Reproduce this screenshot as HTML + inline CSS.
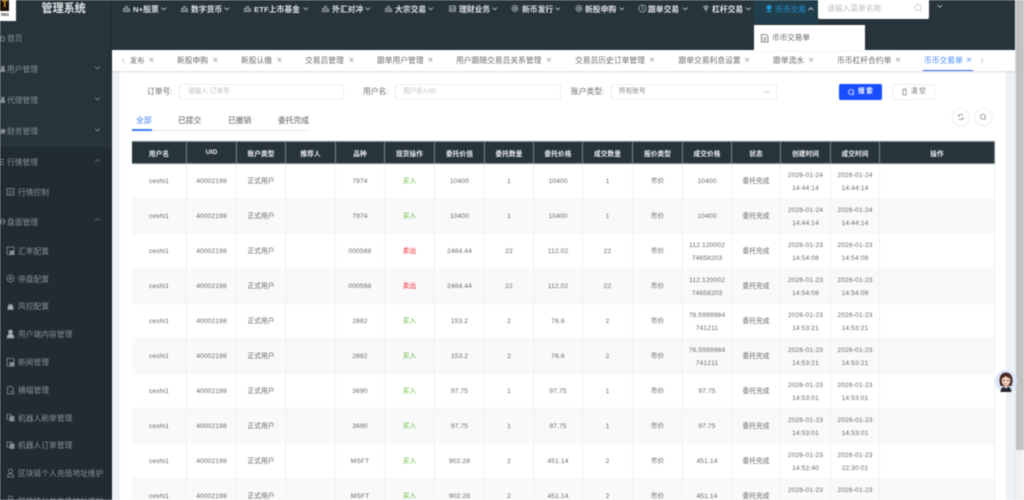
<!DOCTYPE html>
<html lang="zh"><head><meta charset="utf-8"><title>管理系统</title>
<style>
*{box-sizing:border-box}
html,body{margin:0;padding:0;width:1024px;height:500px;overflow:hidden;background:#fff}
#r{position:relative;width:1024px;height:500px;overflow:hidden;background:#27343b;font-family:"Liberation Sans","Noto Sans CJK SC",sans-serif;filter:blur(.45px)}
.a{position:absolute}
.t{position:absolute;white-space:nowrap;line-height:12px;height:12px;margin-top:1px}
.m{font-size:7.77px;color:#dfe2e4;font-weight:700;letter-spacing:.03px}
.s{font-size:7.77px;color:#87919600;color:#879196}
.b{font-size:7.77px;color:#66696d}
.ph{font-size:6.67px;color:#bcc0c7}
svg{position:absolute;overflow:visible}
table{position:absolute;left:132px;top:141px;width:863px;border-collapse:separate;border-spacing:0;table-layout:fixed;font-size:6.67px;letter-spacing:.12px;color:#66696d;text-align:center}
th{height:23px;background:#27343b;color:#eef0f1;font-weight:700;border-right:1px solid #79848a;border-top:1px solid #79848a;border-bottom:1px solid #79848a;padding:0}
td{height:35px;padding:1px 0 0;line-height:13px;border-right:1px solid #f0f1f6;border-bottom:1px solid #f4f5f8}
tr:nth-child(even) td{background:#f9f9fa}
.g{color:#5cbd33}.d{color:#f5222d}
</style></head><body><div id="r">

<!-- sidebar submenu -->
<div class="a" style="left:0;top:147px;width:111px;height:353px;background:#202c32"></div>
<div class="a" style="left:111px;top:0;width:1px;height:500px;background:#1f2a30"></div>

<!-- content bg -->
<div class="a" style="left:112px;top:50px;width:904px;height:450px;background:#eff2f5"></div>
<div class="a" style="left:120px;top:71px;width:886px;height:429px;background:#fff"></div>
<div class="a" style="left:1016px;top:0;width:8px;height:500px;background:#f1f1f1"></div>
<div class="a" style="left:1016px;top:0;width:8px;height:450px;background:#c1c1c1"></div>
<div class="a" style="left:1015px;top:0;width:1px;height:500px;background:#e6e8ea"></div>

<!-- logo -->
<div class="a" style="left:0;top:0;width:16px;height:21px;background:#fff"></div>
<div class="a" style="left:0;top:0;width:9px;height:11px;background:#1b1208"></div>
<div class="t" style="left:2px;top:-1px;font-size:9px;font-weight:700;color:#e8a020;line-height:9px;height:9px">T</div>
<div class="t" style="left:1px;top:8px;font-size:4.500px;font-weight:700;color:#333">ING</div>

<!-- title -->
<div class="t" style="left:41.500px;top:1px;font-size:11.100px;font-weight:700;color:#e4e7e8;line-height:14px;height:14px">管理系统</div>

<!-- top menu icons -->
<svg style="left:0;top:0" width="1024" height="50" fill="none" stroke="#b5bbbe" stroke-width=".8">
<path d="M123.500 11.500v-3h2v3M125.500 11.500v-5h2v5M127.500 11.500v-2.500h2v2.500M123 11.500h7"/>
<path d="M181.500 11.500v-3h2v3M183.500 11.500v-5h2v5M185.500 11.500v-2.500h2v2.500M181 11.500h7"/>
<path d="M244.500 11.500v-3h2v3M246.500 11.500v-5h2v5M248.500 11.500v-2.500h2v2.500M244 11.500h7"/>
<path d="M322.500 11.500v-3h2v3M324.500 11.500v-5h2v5M326.500 11.500v-2.500h2v2.500M322 11.500h7"/>
<path d="M385.500 11.500v-3h2v3M387.500 11.500v-5h2v5M389.500 11.500v-2.500h2v2.500M385 11.500h7"/>
<rect x="449.500" y="6" width="6" height="5.500"/><path d="M449.500 8h6M449.500 9.800h6"/>
<circle cx="515" cy="8.500" r="3"/><circle cx="515" cy="8.500" r="1.200"/>
<circle cx="579" cy="8.500" r="3"/><circle cx="579" cy="8.500" r="1.200"/>
<circle cx="642.500" cy="8.500" r="3.500"/><path d="M642.500 6.500v2.200l1.300 1"/>
<path d="M703 6.500h6M706 5v7M704.500 6.500v2.500h3v-2.500"/>
<g stroke="#c3c8cb">
<path d="M161.500 7.500l2.300 2.300 2.300-2.300M224.500 7.500l2.300 2.300 2.300-2.300M303.500 7.500l2.300 2.300 2.300-2.300M365.500 7.500l2.300 2.300 2.300-2.300M428.500 7.500l2.300 2.300 2.300-2.300M492.500 7.500l2.300 2.300 2.300-2.300M555.500 7.500l2.300 2.300 2.300-2.300M619.500 7.500l2.300 2.300 2.300-2.300M683 7.500l2.300 2.300 2.300-2.300M746 7.500l2.300 2.300 2.300-2.300M937.500 5l2.300 2.300 2.300-2.300"/>
</g>
</svg>
<div class="t m" style="left:133px;top:2.500px">N+股票</div>
<div class="t m" style="left:191px;top:2.500px">数字货币</div>
<div class="t m" style="left:254px;top:2.500px">ETF上市基金</div>
<div class="t m" style="left:332px;top:2.500px">外汇对冲</div>
<div class="t m" style="left:395px;top:2.500px">大宗交易</div>
<div class="t m" style="left:459px;top:2.500px">理财业务</div>
<div class="t m" style="left:522px;top:2.500px">新币发行</div>
<div class="t m" style="left:585px;top:2.500px">新股申购</div>
<div class="t m" style="left:648px;top:2.500px">跟单交易</div>
<div class="t m" style="left:712px;top:2.500px">杠杆交易</div>

<!-- active menu -->
<div class="a" style="left:754px;top:0;width:64px;height:24px;background:#213e4c"></div>
<div class="t" style="left:775px;top:2.500px;font-size:7.770px;color:#1f9bdc">币币交易</div>
<svg style="left:0;top:0" width="1024" height="50" fill="none" stroke="#1f9bdc" stroke-width=".9">
<circle cx="769" cy="7.500" r="2" fill="#1f9bdc"/><path d="M769 9.500v2M766.500 11.500h5"/>
<path d="M808.500 10l2.300-2.300 2.300 2.300" stroke="#d0d4d6"/>
</svg>

<!-- search box -->
<div class="a" style="left:818px;top:0;width:111px;height:18.500px;background:#fff;border-radius:0 0 2px 2px"></div>
<div class="t" style="left:827px;top:1.500px;font-size:7.770px;color:#b9bdc3">请输入菜单名称</div>
<svg style="left:0;top:0" width="1024" height="30" fill="none" stroke="#c2c6ca" stroke-width=".8"><circle cx="918" cy="7.500" r="3"/><path d="M920.200 9.700l1.400 1.400"/></svg>

<!-- tabs bar -->
<div class="a" style="left:112px;top:50px;width:903px;height:21px;background:#fff;box-shadow:0 1px 2px rgba(0,0,0,.14)"></div>
<svg style="left:0;top:50px" width="1024" height="22" fill="none" stroke="#b5b8bb" stroke-width=".7">
<path d="M124.500 8.500l-2 2.200 2 2.200M981 8.500l2 2.200-2 2.200"/>
</svg>
<div class="t" style="left:130px;top:54px;color:#66696d;font-size:7.200px">发布</div>
<div class="t b" style="left:177px;top:54px">新股申购</div>
<div class="t b" style="left:241px;top:54px">新股认缴</div>
<div class="t b" style="left:305px;top:54px">交易员管理</div>
<div class="t b" style="left:377px;top:54px">跟单用户管理</div>
<div class="t b" style="left:456px;top:54px">用户跟随交易员关系管理</div>
<div class="t b" style="left:575px;top:54px">交易员历史订单管理</div>
<div class="t b" style="left:678.500px;top:54px">跟单交易利息设置</div>
<div class="t b" style="left:773px;top:54px">跟单流水</div>
<div class="t b" style="left:837px;top:54px">币币杠杆合约单</div>
<div class="t" style="left:924px;top:54px;font-size:7.770px;color:#3f86f5">币币交易单</div>
<svg style="left:0;top:50px" width="1024" height="22" fill="none" stroke="#85888c" stroke-width=".65">
<path d="M149.500 7.700l4 4m0-4l-4 4M213.500 7.700l4 4m0-4l-4 4M277.500 7.700l4 4m0-4l-4 4M349.500 7.700l4 4m0-4l-4 4M428.500 7.700l4 4m0-4l-4 4M547 7.700l4 4m0-4l-4 4M650 7.700l4 4m0-4l-4 4M745 7.700l4 4m0-4l-4 4M809 7.700l4 4m0-4l-4 4M896 7.700l4 4m0-4l-4 4"/>
<path d="M967 7.700l4 4m0-4l-4 4" stroke="#3f86f5"/>
</svg>
<div class="a" style="left:923px;top:70px;width:50px;height:1px;background:#2f6df6"></div>

<!-- sidebar -->
<svg style="left:0;top:0" width="112" height="500" fill="none" stroke="#87919600" stroke-width=".8">
<g stroke="#879196">
<path d="M0 38.500l2.500-2.500 2.500 2.500M.8 38v3h3.400v-3"/>
<path d="M.8 71.500c0-2 1-3 2-3s2 1 2 3zM2.800 66a1.300 1.300 0 1 0 .01 0z" fill="#879196"/>
<path d="M.8 102.500c0-2 1-3 2-3s2 1 2 3zM2.800 97a1.300 1.300 0 1 0 .01 0z" fill="#879196"/>
<path d="M2.800 128l.9 2 2 .2-1.500 1.400.4 2-1.800-1-1.800 1 .4-2L.9 130.200l2-.2z" fill="#879196"/>
<path d="M0 159.500h4M0 162h4M0 164.500h4"/>
<circle cx="2.500" cy="221.500" r="2.500"/><path d="M0 221.500h5"/>
<rect x="7" y="188.500" width="7" height="6.500"/><path d="M8.500 191h4M8.500 193h4"/>
<path d="M7 247h7v7.500H7z"/><path d="M10 251h4v3.500h-4z" fill="#879196"/>
<circle cx="10.500" cy="278.500" r="3.500"/><circle cx="10.500" cy="278.500" r="1.200"/>
<path d="M8 309.500v-3.500h5v3.500zM9 306v-1.500h3v1.500zM7.500 309.500h6" fill="#aab2b6"/>
<path d="M7 338c0-3 1.500-4 3.500-4s3.500 1 3.500 4z" fill="#aab2b6"/><circle cx="10.500" cy="332" r="2" fill="#aab2b6"/>
<path d="M7 358.500h7v7.500H7z"/><path d="M10 362.500h4v3.500h-4z" fill="#879196"/>
<path d="M7.500 386.500h4l2 2v1.500M7.500 386.500v7.500h3"/><circle cx="12.500" cy="392.500" r="1.500"/>
<path d="M7 414.500h4.500v5H7z"/><path d="M10 416.500h4v4.500h-4z" fill="#879196"/>
<path d="M7 442h4.500v5H7z"/><path d="M10 444h4v4.500h-4z" fill="#879196"/>
<circle cx="10.500" cy="471" r="2"/><path d="M7.500 477l1-3h4l1 3z"/>
<circle cx="10.500" cy="498" r="2"/>
<path d="M95 66.500l2.500 2.500 2.500-2.500M95 97.500l2.500 2.500 2.500-2.500M95 128.500l2.500 2.500 2.500-2.500"/>
<path d="M95 162l2.500-2.500 2.500 2.500M95 221l2.500-2.500 2.500 2.500" stroke="#5f6a70"/>
</g>
</svg>
<div class="t s" style="left:7px;top:32px">首页</div>
<div class="t s" style="left:7px;top:63px">用户管理</div>
<div class="t s" style="left:7px;top:94px">代理管理</div>
<div class="t s" style="left:7px;top:125px">财务管理</div>
<div class="t s" style="left:7px;top:156px">行情管理</div>
<div class="t s" style="left:18px;top:186px">行情控制</div>
<div class="t s" style="left:7px;top:215.500px">盘面管理</div>
<div class="t s" style="left:18px;top:244.500px">汇率配置</div>
<div class="t s" style="left:18px;top:272.500px">停盘配置</div>
<div class="t s" style="left:18px;top:300px">风控配置</div>
<div class="t s" style="left:18px;top:328px">用户端内容管理</div>
<div class="t s" style="left:18px;top:356px">新闻管理</div>
<div class="t s" style="left:18px;top:384px">横幅管理</div>
<div class="t s" style="left:18px;top:411.500px">机器人刷单管理</div>
<div class="t s" style="left:18px;top:439px">机器人订单管理</div>
<div class="t s" style="left:18px;top:467px">区块链个人充值地址维护</div>
<div class="t s" style="left:18px;top:494.500px">区块链公共充值地址维护</div>

<!-- form -->
<div class="t b" style="left:147px;top:85px">订单号:</div>
<div class="a" style="left:179px;top:84px;width:165px;height:16px;border:1px solid #eceef2;border-radius:2px"></div>
<div class="t ph" style="left:188px;top:85px">请输入 订单号</div>
<div class="t b" style="left:363px;top:85px">用户名:</div>
<div class="a" style="left:395px;top:84px;width:166px;height:16px;border:1px solid #eceef2;border-radius:2px"></div>
<div class="t ph" style="left:403px;top:85px">用户名/UID</div>
<div class="t b" style="left:571px;top:85px">账户类型:</div>
<div class="a" style="left:611px;top:84px;width:166px;height:16px;border:1px solid #eceef2;border-radius:2px"></div>
<div class="t" style="left:619px;top:85px;font-size:6.670px;color:#85888d">所有账号</div>
<div class="a" style="left:839px;top:84px;width:43px;height:16px;background:#1a4dff;border-radius:2px"></div>
<div class="t" style="left:858px;top:85px;font-size:6.670px;color:#fff;font-weight:700;letter-spacing:1.500px">搜索</div>
<div class="a" style="left:892px;top:84px;width:43px;height:16px;border:1px solid #eceef2;border-radius:2px"></div>
<div class="t" style="left:911px;top:85px;font-size:6.670px;color:#66696d;letter-spacing:1.500px">清空</div>
<svg style="left:0;top:80px" width="1024" height="50" fill="none" stroke-width=".8">
<path d="M764.500 10.500l2.500 2.500 2.500-2.500" stroke="#c0c4cc"/>
<circle cx="851" cy="12" r="2.500" stroke="#fff"/><path d="M852.800 13.800l1.200 1.200" stroke="#fff"/>
<path d="M902 9.500h5M903 9.500v5.500h3v-5.500M904 8.500h1" stroke="#85888c"/>
</svg>

<!-- sub tabs -->
<div class="t" style="left:136px;top:114px;font-size:7.770px;color:#3f7df5">全部</div>
<div class="t" style="left:178px;top:114px;font-size:7.770px;color:#55585c">已提交</div>
<div class="t" style="left:228px;top:114px;font-size:7.770px;color:#55585c">已撤销</div>
<div class="t" style="left:278px;top:114px;font-size:7.770px;color:#55585c">委托完成</div>
<div class="a" style="left:132px;top:129.500px;width:177px;height:1px;background:#e8eaf0"></div>
<div class="a" style="left:132px;top:129px;width:20px;height:1.500px;background:#3f7df5"></div>

<!-- round buttons -->
<svg style="left:0;top:105px" width="1024" height="26" fill="none" stroke-width=".7">
<circle cx="960.800" cy="12" r="8.700" fill="#fff" stroke="#e4e6ea"/>
<circle cx="983.300" cy="12" r="8.700" fill="#fff" stroke="#e4e6ea"/>
<path d="M963 10.500a2.500 2.500 0 0 0-4.500.5M958.700 13.500a2.500 2.500 0 0 0 4.500-.5M958.500 10v1.200h1.200M963.200 14v-1.200h-1.200" stroke="#777"/>
<circle cx="983" cy="11.700" r="2.500" stroke="#777"/><path d="M984.800 13.500l1 1" stroke="#777"/>
</svg>

<!-- table -->
<table>
<colgroup><col style="width:55px"><col style="width:50px"><col style="width:49px"><col style="width:50px"><col style="width:49px"><col style="width:50px"><col style="width:50px"><col style="width:49px"><col style="width:49px"><col style="width:50px"><col style="width:50px"><col style="width:49px"><col style="width:49px"><col style="width:50px"><col style="width:49px"><col style="width:115px"></colgroup>
<thead><tr><th>用户名</th><th>UID</th><th>账户类型</th><th>推荐人</th><th>品种</th><th>现货操作</th><th>委托价值</th><th>委托数量</th><th>委托价格</th><th>成交数量</th><th>报价类型</th><th>成交价格</th><th>状态</th><th>创建时间</th><th>成交时间</th><th>操作</th></tr></thead>
<tbody>
<tr><td>ceshi1</td><td>40002198</td><td>正式用户</td><td></td><td>7974</td><td class="g">买入</td><td>10400</td><td>1</td><td>10400</td><td>1</td><td>市价</td><td>10400</td><td>委托完成</td><td>2026-01-24<br>14:44:14</td><td>2026-01-24<br>14:44:14</td><td></td></tr>
<tr><td>ceshi1</td><td>40002198</td><td>正式用户</td><td></td><td>7974</td><td class="g">买入</td><td>10400</td><td>1</td><td>10400</td><td>1</td><td>市价</td><td>10400</td><td>委托完成</td><td>2026-01-24<br>14:44:14</td><td>2026-01-24<br>14:44:14</td><td></td></tr>
<tr><td>ceshi1</td><td>40002198</td><td>正式用户</td><td></td><td>000568</td><td class="d">卖出</td><td>2464.44</td><td>22</td><td>112.02</td><td>22</td><td>市价</td><td>112.120002<br>74658203</td><td>委托完成</td><td>2026-01-23<br>14:54:08</td><td>2026-01-23<br>14:54:09</td><td></td></tr>
<tr><td>ceshi1</td><td>40002198</td><td>正式用户</td><td></td><td>000568</td><td class="d">卖出</td><td>2464.44</td><td>22</td><td>112.02</td><td>22</td><td>市价</td><td>112.120002<br>74658203</td><td>委托完成</td><td>2026-01-23<br>14:54:08</td><td>2026-01-23<br>14:54:09</td><td></td></tr>
<tr><td>ceshi1</td><td>40002198</td><td>正式用户</td><td></td><td>2882</td><td class="g">买入</td><td>153.2</td><td>2</td><td>76.6</td><td>2</td><td>市价</td><td>76.5999984<br>741211</td><td>委托完成</td><td>2026-01-23<br>14:53:21</td><td>2026-01-23<br>14:53:21</td><td></td></tr>
<tr><td>ceshi1</td><td>40002198</td><td>正式用户</td><td></td><td>2882</td><td class="g">买入</td><td>153.2</td><td>2</td><td>76.6</td><td>2</td><td>市价</td><td>76.5999984<br>741211</td><td>委托完成</td><td>2026-01-23<br>14:53:21</td><td>2026-01-23<br>14:53:21</td><td></td></tr>
<tr><td>ceshi1</td><td>40002198</td><td>正式用户</td><td></td><td>3690</td><td class="g">买入</td><td>97.75</td><td>1</td><td>97.75</td><td>1</td><td>市价</td><td>97.75</td><td>委托完成</td><td>2026-01-23<br>14:53:01</td><td>2026-01-23<br>14:53:01</td><td></td></tr>
<tr><td>ceshi1</td><td>40002198</td><td>正式用户</td><td></td><td>3690</td><td class="g">买入</td><td>97.75</td><td>1</td><td>97.75</td><td>1</td><td>市价</td><td>97.75</td><td>委托完成</td><td>2026-01-23<br>14:53:01</td><td>2026-01-23<br>14:53:01</td><td></td></tr>
<tr><td>ceshi1</td><td>40002198</td><td>正式用户</td><td></td><td>MSFT</td><td class="g">买入</td><td>902.28</td><td>2</td><td>451.14</td><td>2</td><td>市价</td><td>451.14</td><td>委托完成</td><td>2026-01-23<br>14:52:40</td><td>2026-01-23<br>22:30:01</td><td></td></tr>
<tr><td>ceshi1</td><td>40002198</td><td>正式用户</td><td></td><td>MSFT</td><td class="g">买入</td><td>902.28</td><td>2</td><td>451.14</td><td>2</td><td>市价</td><td>451.14</td><td>委托完成</td><td>2026-01-23<br>14:52:40</td><td>2026-01-23<br>22:30:01</td><td></td></tr>
</tbody></table>

<!-- floating dropdown -->
<div class="a" style="left:754px;top:24.500px;width:111px;height:26px;background:#fff;box-shadow:0 0 2px rgba(0,0,0,.12)"></div>
<div class="t" style="left:772px;top:31px;font-size:7.600px;color:#606266">币币交易单</div>
<svg style="left:0;top:0" width="1024" height="50" fill="none" stroke="#606266" stroke-width=".8"><path d="M761.500 34.500h4.500l2 2v5.500h-6.500zM763 38h3.500M763 40h3.500"/></svg>

<!-- avatar -->
<svg style="left:995px;top:370px" width="22" height="22">
<circle cx="11" cy="11" r="11" fill="#dbe6f8"/>
<path d="M4.500 12c-.5-7 3-9.500 6.500-9.500s7 2.500 6.500 9.500l-1 4h-11z" fill="#4a2a24"/>
<ellipse cx="11" cy="10.500" rx="4.300" ry="5.300" fill="#f6d2c2"/>
<path d="M6.500 8.500c1-3 3.500-4 5-4s3.500 1.500 4 4c-2-.5-4-1.500-5-2.500-1 1.200-2.500 2-4 2.500z" fill="#4a2a24"/>
<circle cx="9" cy="10.500" r=".8" fill="#332"/><circle cx="13" cy="10.500" r=".8" fill="#332"/>
<path d="M10 13.500h2" stroke="#d56a66" stroke-width=".7"/>
<path d="M5.500 22c0-4 2.500-5.500 5.500-5.500s5.500 1.500 5.500 5.500z" fill="#26282c"/>
<path d="M9.500 16h3v1.500l-1.500 1-1.500-1z" fill="#f6d2c2"/>
</svg>

</div></body></html>
